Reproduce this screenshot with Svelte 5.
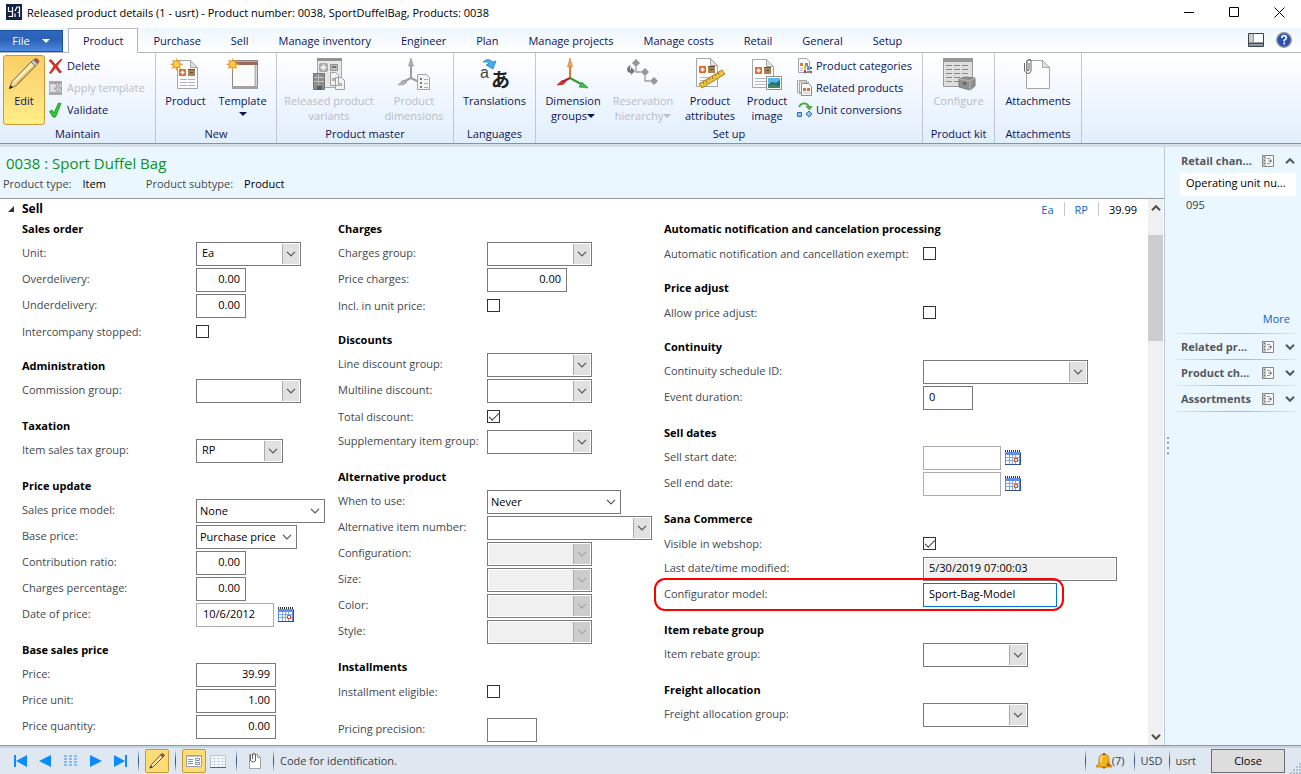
<script lang="ts">
	type Field = {
		id: string;
		label: string;
		kind: 'lookup' | 'select' | 'number' | 'text' | 'date' | 'check';
		width?: number;
		value?: string;
		checked?: boolean;
		disabled?: boolean;
		highlight?: boolean;
	};

	type Group = { title?: string; fields: Field[] };

	const tabs = [
		'Product',
		'Purchase',
		'Sell',
		'Manage inventory',
		'Engineer',
		'Plan',
		'Manage projects',
		'Manage costs',
		'Retail',
		'General',
		'Setup'
	];

	let activeTab = $state('Product');
	let expanded = $state(true);

	const columns: { name: string; groups: Group[] }[] = [
		{
			name: 'col-sales',
			groups: [
				{
					title: 'Sales order',
					fields: [
						{ id: 'unit', label: 'Unit:', kind: 'lookup', width: 105, value: 'Ea' },
						{ id: 'over', label: 'Overdelivery:', kind: 'number', width: 50, value: '0.00' },
						{ id: 'under', label: 'Underdelivery:', kind: 'number', width: 50, value: '0.00' },
						{ id: 'interco', label: 'Intercompany stopped:', kind: 'check' }
					]
				},
				{
					title: 'Administration',
					fields: [{ id: 'commission', label: 'Commission group:', kind: 'lookup', width: 105 }]
				},
				{
					title: 'Taxation',
					fields: [{ id: 'tax', label: 'Item sales tax group:', kind: 'lookup', width: 87, value: 'RP' }]
				},
				{
					title: 'Price update',
					fields: [
						{ id: 'model', label: 'Sales price model:', kind: 'select', width: 129, value: 'None' },
						{ id: 'base', label: 'Base price:', kind: 'select', width: 101, value: 'Purchase price' },
						{ id: 'ratio', label: 'Contribution ratio:', kind: 'number', width: 50, value: '0.00' },
						{ id: 'percent', label: 'Charges percentage:', kind: 'number', width: 50, value: '0.00' },
						{ id: 'pricedate', label: 'Date of price:', kind: 'date', width: 78, value: '10/6/2012' }
					]
				},
				{
					title: 'Base sales price',
					fields: [
						{ id: 'price', label: 'Price:', kind: 'number', width: 80, value: '39.99' },
						{ id: 'priceunit', label: 'Price unit:', kind: 'number', width: 80, value: '1.00' },
						{ id: 'priceqty', label: 'Price quantity:', kind: 'number', width: 80, value: '0.00' }
					]
				}
			]
		},
		{
			name: 'col-charges',
			groups: [
				{
					title: 'Charges',
					fields: [
						{ id: 'chargesgroup', label: 'Charges group:', kind: 'lookup', width: 105 },
						{ id: 'pricecharges', label: 'Price charges:', kind: 'number', width: 80, value: '0.00' },
						{ id: 'incl', label: 'Incl. in unit price:', kind: 'check' }
					]
				},
				{
					title: 'Discounts',
					fields: [
						{ id: 'line', label: 'Line discount group:', kind: 'lookup', width: 105 },
						{ id: 'multiline', label: 'Multiline discount:', kind: 'lookup', width: 105 },
						{ id: 'total', label: 'Total discount:', kind: 'check', checked: true },
						{ id: 'supplementary', label: 'Supplementary item group:', kind: 'lookup', width: 105 }
					]
				},
				{
					title: 'Alternative product',
					fields: [
						{ id: 'when', label: 'When to use:', kind: 'select', width: 134, value: 'Never' },
						{ id: 'altitem', label: 'Alternative item number:', kind: 'lookup', width: 165 },
						{ id: 'config', label: 'Configuration:', kind: 'lookup', width: 105, disabled: true },
						{ id: 'size', label: 'Size:', kind: 'lookup', width: 105, disabled: true },
						{ id: 'color', label: 'Color:', kind: 'lookup', width: 105, disabled: true },
						{ id: 'style', label: 'Style:', kind: 'lookup', width: 105, disabled: true }
					]
				},
				{
					title: 'Installments',
					fields: [{ id: 'installment', label: 'Installment eligible:', kind: 'check' }]
				},
				{
					fields: [{ id: 'precision', label: 'Pricing precision:', kind: 'number', width: 50 }]
				}
			]
		},
		{
			name: 'col-other',
			groups: [
				{
					title: 'Automatic notification and cancelation processing',
					fields: [{ id: 'exempt', label: 'Automatic notification and cancellation exempt:', kind: 'check' }]
				},
				{
					title: 'Price adjust',
					fields: [{ id: 'adjust', label: 'Allow price adjust:', kind: 'check' }]
				},
				{
					title: 'Continuity',
					fields: [
						{ id: 'schedule', label: 'Continuity schedule ID:', kind: 'lookup', width: 165 },
						{ id: 'duration', label: 'Event duration:', kind: 'text', width: 50, value: '0' }
					]
				},
				{
					title: 'Sell dates',
					fields: [
						{ id: 'start', label: 'Sell start date:', kind: 'date', width: 78 },
						{ id: 'end', label: 'Sell end date:', kind: 'date', width: 78 }
					]
				},
				{
					title: 'Sana Commerce',
					fields: [
						{ id: 'webshop', label: 'Visible in webshop:', kind: 'check', checked: true },
						{
							id: 'modified',
							label: 'Last date/time modified:',
							kind: 'text',
							width: 194,
							value: '5/30/2019 07:00:03',
							disabled: true
						},
						{
							id: 'configurator',
							label: 'Configurator model:',
							kind: 'text',
							width: 134,
							value: 'Sport-Bag-Model',
							highlight: true
						}
					]
				},
				{
					title: 'Item rebate group',
					fields: [{ id: 'rebate', label: 'Item rebate group:', kind: 'lookup', width: 105 }]
				},
				{
					title: 'Freight allocation',
					fields: [{ id: 'freight', label: 'Freight allocation group:', kind: 'lookup', width: 105 }]
				}
			]
		}
	];

	const factBoxes = ['Related pr...', 'Product ch...', 'Assortments'];
</script>

{#snippet chevron()}
	<svg width="10" height="6" viewBox="0 0 10 6" aria-hidden="true">
		<path d="M1 .8 5 4.8 9 .8" fill="none" stroke="currentColor" stroke-width="1.2" />
	</svg>
{/snippet}

{#snippet page(x: number, y: number, w: number, h: number)}
	<path d="M{x} {y}h{w - 7}l7 7v{h - 7}h-{w}z" fill="#fcfcfc" stroke="#a6a6a6" />
	<path d="M{x + w - 7} {y}v7h7z" fill="#e2e2e2" stroke="#a6a6a6" />
{/snippet}

{#snippet sun()}
	<path
		d="m6.5 0 1.4 3.3 3.2-1.8-1.4 3.400 3.600 1.300-3.600 1.500 1.500 3.300-3.400-1.400-1.300 3.500-1.400-3.500-3.400 1.500 1.500-3.400L0 6.300l3.500-1.400L2 1.500l3.300 1.600z"
		fill="#ed9a17"
	/>
	<circle cx="6.6" cy="6.3" r="2.8" fill="#ffc94a" />
{/snippet}

{#snippet productMarks(x: number, y: number)}
	<rect {x} {y} width="7" height="7" rx="1" fill="#e2662b" />
	<path d="M{x + 3.5} {y + 1.5}v4M{x + 1.5} {y + 3.5}h4" stroke="#fff" stroke-width="1.6" />
	<rect x={x + 9} {y} width="7" height="7" fill="#a98252" />
	<path d="M{x + 9} {y + 0.5}h7M{x + 11} {y + 3.5}h3" stroke="#6b4f2c" />
{/snippet}

{#snippet icon(name: string)}
	{#if name === 'edit'}
		<svg width="32" height="32" viewBox="0 0 32 32" aria-hidden="true">
			<path d="m1.500 30.500 2.500-7L23 4l4.500 4L8.500 27.500z" fill="#f3dc98" stroke="#7d6a3a" />
			<path d="M6 24 24.500 5.500" stroke="#fff6cf" stroke-width="1.500" />
			<path d="M8 26.500 27 7.500" stroke="#b98d3c" />
			<path d="m1 31 1.500-4 2.500 2.500z" fill="#222" />
			<path d="m25.500 2 2-1.500q3.500.5 3.500 3.500l-2 2z" fill="#c9454e" stroke="#7a4347" stroke-width=".7" />
			<path d="M23 4 25.500 1.800 29.700 6 27.500 8z" fill="#c3d3cb" stroke="#597064" stroke-width=".8" />
		</svg>
	{:else if name === 'delete'}
		<svg width="16" height="16" viewBox="0 0 16 16" aria-hidden="true">
			<path d="M1 2.500 3 1.500 7.500 6.500 13 1l1 .5L9 8l4.500 6-2 1L7.500 9.800 3 15.500l-1.500-.5L6 8z" fill="#d93226" stroke="#a8170f" stroke-width=".6" />
		</svg>
	{:else if name === 'apply'}
		<svg width="16" height="16" viewBox="0 0 16 16" aria-hidden="true">
			<path d="M1.500 2.500h12v11h-12z" fill="#dedede" stroke="#b0b0b0" />
			<path d="M1 1h13v3H1zM1 12h13v3H1z" fill="#a9a9a9" />
			<path d="M7 3q5-1 5 5h2l-4 4.500L6 8h3q0-3-2-5z" fill="#c8c8c8" stroke="#8f8f8f" stroke-width=".7" />
		</svg>
	{:else if name === 'validate'}
		<svg width="16" height="16" viewBox="0 0 16 16" aria-hidden="true">
			<path d="M1.500 9.500 4 8l2 3L10.500 1l2.500.5L7.500 15H5z" fill="#2ccc35" stroke="#118c1c" stroke-width=".8" />
		</svg>
	{:else if name === 'product'}
		<svg width="32" height="32" viewBox="0 0 32 32" aria-hidden="true">
			{@render page(7.5, 2.5, 20, 28)}
			{@render productMarks(9, 11)}
			<path d="M10 21.500h15M10 24.500h15M10 27.500h15" stroke="#a7b4c5" />
			<path d="M17.500 20v9" stroke="#fcfcfc" />
			<g>{@render sun()}</g>
		</svg>
	{:else if name === 'template'}
		<svg width="34" height="32" viewBox="0 0 34 32" aria-hidden="true">
			<path d="M6.500 2.500h25v28h-25z" fill="#fbfbfb" stroke="#8d8885" />
			<path d="M7 3h25v4H7z" fill="#9d6a55" />
			<path d="M7 3.500h24" stroke="#c9a696" />
			<path d="M6 28h26v3H6z" fill="#a1a1a1" />
			<path d="M29.500 7v21" stroke="#b5b5b5" stroke-width="2" />
			<g>{@render sun()}</g>
		</svg>
	{:else if name === 'variants'}
		<svg width="34" height="32" viewBox="0 0 34 32" aria-hidden="true">
			<path d="M5.500.5h24v29h-24z" fill="#e8e8e8" stroke="#a8a8a8" />
			<path d="M5 0h25v3H5z" fill="#929292" />
			<rect x="7" y="5" width="9" height="9" rx="2" fill="#a8a8a8" />
			<path d="M11.500 6.500v6M8.500 9.500h6" stroke="#f3f3f3" stroke-width="2" />
			<path d="M18.500 6.500h7v6h-7z" fill="#bdbdbd" stroke="#909090" />
			<path d="M20 8h4v2h-4z" fill="#737373" />
			<path d="M1.500 15.500h11v16h-11z" fill="#8d8d8d" stroke="#777" />
			<path d="M2 19.500h10M2 23.500h10" stroke="#c6c6c6" />
			<path d="M6.500 16v11" stroke="#bbb" />
			<path d="M5 28h5v4H5z" fill="#5e5e5e" />
			<path d="M18.500 14.500h5l3 3v10h-8zM23.500 19.500h6l3 3v9h-9z" fill="#f2f2f2" stroke="#a0a0a0" />
			<path d="M20 20h3v3h-3zM26 25h4v3h-4z" fill="#b4b4b4" />
		</svg>
	{:else if name === 'dims'}
		<svg width="34" height="32" viewBox="0 0 34 32" aria-hidden="true">
			<path d="M14 7v13l-8 4M14 20l8 4" fill="none" stroke="#9d9d9d" stroke-width="2" />
			<path d="m14 0 2.500 8h-5zM1 27l5-5 4 2-3 2.500z" fill="#b3b3b3" stroke="#8d8d8d" stroke-width=".6" />
			<path d="M20.500 16.500h9l3 3v12h-12z" fill="#f4f4f4" stroke="#a4a4a4" />
			<path d="M23 20h2v2h-2zM23 24h2v2h-2zM23 28h2v2h-2z" fill="#777" />
			<path d="M27 21.500h4M27 25.500h4M27 29.500h4" stroke="#aaa" />
		</svg>
	{:else if name === 'translate'}
		<svg class="letters" width="32" height="32" viewBox="0 0 32 32" aria-hidden="true">
			<text x="1" y="20" font-size="16" fill="#444">a</text>
			<text x="12" y="29" font-size="19" font-weight="bold" fill="#222">あ</text>
			<path d="M4 4Q9-1 14 4l3-1-3 8-7-4 3-1Q8 3 4 4z" fill="#43ade8" stroke="#1c79b8" stroke-width=".7" />
		</svg>
	{:else if name === 'dimgroups'}
		<svg width="34" height="32" viewBox="0 0 34 32" aria-hidden="true">
			<path d="M14 8v12" stroke="#d87a2a" stroke-width="2" />
			<path d="m14 0 2.500 9h-5z" fill="#efa460" stroke="#c9762c" stroke-width=".6" />
			<path d="m14 20-8 4" stroke="#b51e23" stroke-width="2" />
			<path d="m1 27 5-4.500 4 1-3 3z" fill="#d82b30" stroke="#a3151a" stroke-width=".6" />
			<path d="m14 20 11 6" stroke="#2c9e33" stroke-width="2" />
			<path d="m32 30-9-1 3-5z" fill="#42bd47" stroke="#23832a" stroke-width=".6" />
		</svg>
	{:else if name === 'hierarchy'}
		<svg width="34" height="32" viewBox="0 0 34 32" aria-hidden="true">
			<path d="M10 8v6h9M19 14v9h9" fill="none" stroke="#9a9a9a" stroke-width="1.300" />
			<path d="m10 1 4 4-4 4-4-4zM19 10l4 4-4 4-4-4zM28 19l4 4-4 4-4-4z" fill="#979797" stroke="#c2c2c2" />
			<path d="M5 7q-4 1-4 5 1 3 4 3v2l4-4-4-4v3q-2-1 0-5z" fill="#777" />
		</svg>
	{:else if name === 'attributes'}
		<svg width="32" height="32" viewBox="0 0 32 32" aria-hidden="true">
			{@render page(2.5, 0.5, 21, 28)}
			{@render productMarks(5, 8)}
			<path d="M6 19.500h15M6 22.500h12M6 25.500h9" stroke="#aebaca" />
			<path d="m5 26 23-14 3 4L8 30z" fill="#edc440" stroke="#a8821f" />
			<path d="m9 24 1 2m2-4 1 3m2-5 1 2m2-4 1 3m2-5 1 2m2-4 1 3" stroke="#866617" stroke-width=".8" />
		</svg>
	{:else if name === 'image'}
		<svg width="32" height="32" viewBox="0 0 32 32" aria-hidden="true">
			{@render page(1.5, 1.5, 21, 28)}
			{@render productMarks(4, 9)}
			<path d="M4 20.500h11M4 23.500h11M4 26.500h11" stroke="#aebaca" />
			<path d="M15.500 18.500h15v13h-15z" fill="#fff" stroke="#8d8d8d" />
			<path d="M17 20h12v5H17z" fill="#5ab6e6" />
			<path d="m17 26 4-2 4 1 4-3v8H17z" fill="#1b6689" />
			<path d="m17 27 5-1 7 2v2H17z" fill="#3d8a58" />
		</svg>
	{:else if name === 'categories'}
		<svg width="16" height="16" viewBox="0 0 16 16" aria-hidden="true">
			<path d="M1.500.5h8l3 3v11h-11z" fill="#fafafa" stroke="#a6a6a6" />
			<path d="M3 5h3v3H3z" fill="#dc7444" />
			<path d="M8 5h3v3H8z" fill="#a98252" />
			<path d="M3 10.500h3M3 12.500h3" stroke="#b7c0cc" />
			<path d="M7 8h2v3H7z" fill="#e8b518" />
			<path d="M10 8h2v4h-2z" fill="#25a7d8" />
			<path d="M13 9h2v2h-2z" fill="#8a37a4" />
			<path d="M7 12h2v3H7zM13 13h2v2h-2z" fill="#d22f4e" />
			<path d="M10 13h2v2h-2z" fill="#36a348" />
		</svg>
	{:else if name === 'related'}
		<svg width="16" height="16" viewBox="0 0 16 16" aria-hidden="true">
			<path d="M.5.5h9v12h-9zM2.500 2h9v12h-9z" fill="#f4f4f4" stroke="#a6a6a6" />
			<path d="M4.500 3.500h7l3 3v9h-10z" fill="#fcfcfc" stroke="#8d8d8d" />
			<path d="M6 8h3v3H6z" fill="#dc7444" />
			<path d="M10 8h3v3h-3z" fill="#a98252" />
			<path d="M6 13h7" stroke="#b7c0cc" />
		</svg>
	{:else if name === 'conversions'}
		<svg width="16" height="16" viewBox="0 0 16 16" aria-hidden="true">
			<path d="M2 5q2-4 6-3.500 3 .5 4 3" fill="none" stroke="#45ab35" stroke-width="1.800" />
			<path d="M9 4.500h6L12.500 8z" fill="#55b83f" stroke="#298a21" stroke-width=".6" />
			<path d="M.5 10.500h4v4h-4zM12 9l3 3-3 3-3-3z" fill="#8fc0f2" stroke="#2f6fb6" />
		</svg>
	{:else if name === 'configure'}
		<svg width="34" height="32" viewBox="0 0 34 32" aria-hidden="true">
			<path d="M1.500.5h29v28h-29z" fill="#dedede" stroke="#999" />
			<path d="M1 0h30v4H1z" fill="#979797" />
			<path d="M4 7.500h24M4 11.500h24M4 15.500h24M4 19.500h24M4 23.500h13" stroke="#8a8a8a" stroke-dasharray="6 2" />
			<path d="m17 21 6-2 10 1v8l-5 4-11-3z" fill="#909090" stroke="#7c7c7c" />
			<path d="m17 21 11 2v9M28 23l5-3" fill="none" stroke="#b8b8b8" />
			<path d="M21 24h3v3h-3z" fill="#666" />
		</svg>
	{:else if name === 'attach'}
		<svg width="32" height="32" viewBox="0 0 32 32" aria-hidden="true">
			{@render page(4.5, 2.5, 23, 28)}
			<path d="M7 5v7q-1 2-2 0V3q2-3 4-1v11q-1 3-3 2.500T2.500 13V5" fill="none" stroke="#666" />
		</svg>
	{:else if name === 'calendar'}
		<svg width="16" height="16" viewBox="0 0 16 16" aria-hidden="true">
			<path d="M0 2h16v13H0z" fill="#5f8fe6" />
			<path d="M0 1h16" stroke="#333" stroke-width="2" stroke-dasharray="1 1" />
			<path d="M1 5h13v9H1z" fill="#fff" />
			<path d="M4.500 5v9M7.500 5v9M10.500 5v9M1 7.500h13M1 10.500h13" stroke="#86a9e4" />
			<path d="M15.500 3v12M0 14.500h16" stroke="#2f4e8c" />
			<path d="M9.500 8.500h3v3h-3z" fill="#fff" stroke="#e0431a" />
		</svg>
	{:else if name === 'box'}
		<svg width="12" height="12" viewBox="0 0 12 12" aria-hidden="true">
			<path d="M.5.5h11v11H.5z" fill="#f7f7f7" stroke="#858585" />
			<path d="M1 1h3v10H1z" fill="#c4c4c4" />
			<path d="M2.500 2v8" stroke="#666" stroke-dasharray="1 2" />
			<path d="M5 3.500h3M5 8.500h3M6 6h3" stroke="#999" />
			<path d="M8 4v4l2-2z" fill="#666" />
		</svg>
	{/if}
{/snippet}

{#snippet big(label: string, name: string, opts: { second?: string; off?: boolean; menu?: boolean; cls: string })}
	<button type="button" class="big {opts.cls}" disabled={opts.off}>
		<span class="pic">{@render icon(name)}</span>
		<span>{label}</span>
		{#if opts.second}
			<span class="line-two">{opts.second}{#if opts.menu}<i class="tri"></i>{/if}</span>
		{:else if opts.menu}
			<i class="tri below"></i>
		{/if}
	</button>
{/snippet}

{#snippet small(label: string, name: string, off: boolean)}
	<button type="button" class="small" disabled={off}>
		{@render icon(name)}
		<span>{label}</span>
	</button>
{/snippet}

{#snippet field(f: Field)}
	<div class="row" class:check={f.kind === 'check'} class:highlight={f.highlight}>
		<label for={f.id}>{f.label}</label>
		{#if f.kind === 'check'}
			<input id={f.id} type="checkbox" checked={f.checked} />
		{:else if f.kind === 'lookup' || f.kind === 'select'}
			<div class="combo {f.kind} w{f.width}">
				<select id={f.id} disabled={f.disabled}>
					<option>{f.value ?? ''}</option>
				</select>
				<span class="arrow">{@render chevron()}</span>
			</div>
		{:else}
			<input
				id={f.id}
				type="text"
				class="box {f.kind} w{f.width}"
				value={f.value ?? ''}
				disabled={f.disabled}
			/>
			{#if f.kind === 'date'}
				<button type="button" class="calendar" aria-label="Pick a date">{@render icon('calendar')}</button>
			{/if}
		{/if}
	</div>
{/snippet}

<div class="window">
	<header class="titlebar">
		<svg width="16" height="16" viewBox="0 0 16 16" aria-hidden="true">
			<path d="M0 0h16v16H0z" fill="#12224a" />
			<path d="M2.500 3v4.500h4M6.500 3v9.500h-4M9 13V9.500M9 7l2-4h2.500v10M11.500 8.500h2" fill="none" stroke="#fff" stroke-width="1.200" />
		</svg>
		<h1>Released product details (1 - usrt) - Product number: 0038, SportDuffelBag, Products: 0038</h1>
		<div class="window-buttons">
			<button type="button" aria-label="Minimize">
				<svg width="11" height="11" viewBox="0 0 11 11"><path d="M0 5.500h10" stroke="#000" /></svg>
			</button>
			<button type="button" aria-label="Maximize">
				<svg width="11" height="11" viewBox="0 0 11 11"><path d="M.5.5h9v9h-9z" fill="none" stroke="#000" /></svg>
			</button>
			<button type="button" aria-label="Close window">
				<svg width="11" height="11" viewBox="0 0 11 11"><path d="m.5.500 10 10m0-10-10 10" stroke="#000" /></svg>
			</button>
		</div>
	</header>

	<nav class="tabs">
		<button type="button" class="file">File <i class="tri"></i></button>
		{#each tabs as tab}
			<button type="button" class="tab" class:active={tab === activeTab} onclick={() => (activeTab = tab)}>{tab}</button>
		{/each}
		<div class="tab-tools">
			<button type="button" aria-label="View layout">
				<svg width="16" height="14" viewBox="0 0 16 14">
					<path d="M.5.5h15v13H.5z" fill="#8f98a1" stroke="#3d4247" />
					<path d="M1 1h4v8H1z" fill="#c5ccd3" />
					<path d="M6 1h9v8H6z" fill="#fff" />
					<path d="M1 10.500h14" stroke="#4b5157" />
				</svg>
			</button>
			<button type="button" aria-label="Help">
				<svg width="16" height="16" viewBox="0 0 16 16">
					<circle cx="8" cy="8" r="7.200" fill="#2a4fb5" stroke="#8d9094" stroke-width="1.500" />
					<path d="M5.700 6q.2-2.300 2.400-2.300T10.400 6Q10.300 7.200 8.200 8.200v1.300" fill="none" stroke="#fff" stroke-width="1.700" />
					<path d="M7.300 10.600h1.800v1.800H7.300z" fill="#fff" />
				</svg>
			</button>
		</div>
	</nav>

	<div class="ribbon">
		<section class="maintain">
			<div class="tools">
				{@render big('Edit', 'edit', { cls: 'pressed' })}
				<div class="stack">
					{@render small('Delete', 'delete', false)}
					{@render small('Apply template', 'apply', true)}
					{@render small('Validate', 'validate', false)}
				</div>
			</div>
			<h2>Maintain</h2>
		</section>
		<section class="new">
			<div class="tools">
				{@render big('Product', 'product', { cls: 'b57' })}
				{@render big('Template', 'template', { menu: true, cls: 'b57' })}
			</div>
			<h2>New</h2>
		</section>
		<section class="master">
			<div class="tools">
				{@render big('Released product', 'variants', { second: 'variants', off: true, cls: 'b100' })}
				{@render big('Product', 'dims', { second: 'dimensions', off: true, cls: 'b70' })}
			</div>
			<h2>Product master</h2>
		</section>
		<section class="languages">
			<div class="tools">
				{@render big('Translations', 'translate', { cls: 'b70' })}
			</div>
			<h2>Languages</h2>
		</section>
		<section class="setup">
			<div class="tools">
				{@render big('Dimension', 'dimgroups', { second: 'groups', menu: true, cls: 'b70' })}
				{@render big('Reservation', 'hierarchy', { second: 'hierarchy', off: true, menu: true, cls: 'b70' })}
				{@render big('Product', 'attributes', { second: 'attributes', cls: 'b64' })}
				{@render big('Product', 'image', { second: 'image', cls: 'b50' })}
				<div class="stack">
					{@render small('Product categories', 'categories', false)}
					{@render small('Related products', 'related', false)}
					{@render small('Unit conversions', 'conversions', false)}
				</div>
			</div>
			<h2>Set up</h2>
		</section>
		<section class="kit">
			<div class="tools">
				{@render big('Configure', 'configure', { off: true, cls: 'b70' })}
			</div>
			<h2>Product kit</h2>
		</section>
		<section class="attachments">
			<div class="tools">
				{@render big('Attachments', 'attach', { cls: 'b82' })}
			</div>
			<h2>Attachments</h2>
		</section>
	</div>

	<div class="body">
		<main>
			<div class="record">
				<h2>0038 : Sport Duffel Bag</h2>
				<dl>
					<dt>Product type:</dt>
					<dd>Item</dd>
					<dt class="subtype">Product subtype:</dt>
					<dd>Product</dd>
				</dl>
			</div>
			<div class="scroll">
				<div class="fasttab">
					<div class="fasttab-head">
						<button type="button" aria-expanded={expanded} onclick={() => (expanded = !expanded)}>
							<svg width="6" height="6" viewBox="0 0 6 6" aria-hidden="true"><path d="M6 0v6H0z" fill="#333" /></svg>
							Sell
						</button>
						<ul>
							<li><a href="#unit">Ea</a></li>
							<li><a href="#tax">RP</a></li>
							<li>39.99</li>
						</ul>
					</div>
					{#if expanded}
						<div class="columns">
							{#each columns as column}
								<div class="column {column.name}">
									{#each column.groups as group}
										<div class="group">
											{#if group.title}<h3>{group.title}</h3>{/if}
											<div class="rows">
												{#each group.fields as f (f.id)}
													{@render field(f)}
												{/each}
											</div>
										</div>
									{/each}
								</div>
							{/each}
						</div>
					{/if}
				</div>
				<div class="scrollbar">
					<button type="button" class="up" aria-label="Scroll up">{@render chevron()}</button>
					<div class="thumb"></div>
					<button type="button" aria-label="Scroll down">{@render chevron()}</button>
				</div>
			</div>
		</main>

		<aside>
			<i class="grip"></i>
			<div class="factbox">
				<h3>Retail chan...</h3>
				{@render icon('box')}
				<button type="button" class="up" aria-label="Collapse">{@render chevron()}</button>
			</div>
			<div class="units">
				<div class="head">Operating unit nu...</div>
				<div class="cell">095</div>
				<a href="#more">More</a>
			</div>
			{#each factBoxes as title}
				<hr />
				<div class="factbox">
					<h3>{title}</h3>
					{@render icon('box')}
					<button type="button" aria-label="Expand">{@render chevron()}</button>
				</div>
			{/each}
			<hr />
		</aside>
	</div>

	<footer>
		<div class="nav-buttons">
			<button type="button" aria-label="First record">
				<svg width="13" height="12" viewBox="0 0 13 12"><path d="M0 0h2v12H0zM13 0v12L2 6z" fill="#0a8cff" /></svg>
			</button>
			<button type="button" aria-label="Previous record">
				<svg width="13" height="12" viewBox="0 0 13 12"><path d="M12 0v12L0 6z" fill="#0a8cff" /></svg>
			</button>
			<button type="button" aria-label="Grid view">
				<svg width="13" height="12" viewBox="0 0 13 12">
					<path d="M0 1h3M0 4h3M0 7h3M0 10h3M5 1h3M5 4h3M5 7h3M5 10h3M10 1h3M10 4h3M10 7h3M10 10h3" stroke="#8db9ec" stroke-width="2" />
				</svg>
			</button>
			<button type="button" aria-label="Next record">
				<svg width="13" height="12" viewBox="0 0 13 12"><path d="M1 0v12l12-6z" fill="#0a8cff" /></svg>
			</button>
			<button type="button" aria-label="Last record">
				<svg width="13" height="12" viewBox="0 0 13 12"><path d="M11 0h2v12h-2zM0 0v12l11-6z" fill="#0a8cff" /></svg>
			</button>
		</div>
		<i class="sep"></i>
		<button type="button" class="toggle" aria-label="Edit mode">
			<svg width="16" height="16" viewBox="0 0 32 32">
				<path d="m2 30 3-7L23 4l5 4L9 27z" fill="#f7e6b4" stroke="#6b5628" stroke-width="2" />
				<path d="m23 4 3-3q4 1 5 4l-3 3z" fill="#c9454e" stroke="#5c5c5c" stroke-width="2" />
				<path d="m1 31 2-6 4 4z" fill="#333" />
			</svg>
		</button>
		<i class="sep"></i>
		<button type="button" class="toggle" aria-label="Form view">
			<svg width="16" height="12" viewBox="0 0 16 12">
				<path d="M.5.5h15v11H.5z" fill="#fff" stroke="#9b9fa6" />
				<path d="M1 1.500h14" stroke="#b9c2d3" />
				<path d="M2 4.500h5M2 6.500h5M2 8.500h5" stroke="#8a8f97" />
				<path d="M9.500 3.500h4v2h-4zM9.500 7.500h4v2h-4z" fill="none" stroke="#8a8f97" />
			</svg>
		</button>
		<button type="button" class="toggle plain" aria-label="List view">
			<svg width="16" height="13" viewBox="0 0 16 13">
				<path d="M.5.5h15v12H.5z" fill="#fff" stroke="#b4c4dd" />
				<path d="M4.500 1v11M8.500 1v11M12.500 1v11M1 3.500h14M1 6.500h14M1 9.500h14" stroke="#d3deee" />
				<path d="M0 12.500h16" stroke="#51627f" />
			</svg>
		</button>
		<i class="sep"></i>
		<button type="button" class="toggle plain" aria-label="Attachments">
			<svg width="14" height="16" viewBox="0 0 14 16">
				<path d="M1.500 1.500h8l3 3v11h-11z" fill="#fff" stroke="#a3a3a3" />
				<path d="M9.500 1.500v3h3" fill="none" stroke="#a3a3a3" />
				<path d="M2.500 2v6q2.500 2 5 0V1q-2.500-1.500-3 0v5" fill="none" stroke="#666" />
			</svg>
		</button>
		<i class="sep"></i>
		<p>Code for identification.</p>
		<i class="sep"></i>
		<button type="button" class="alerts">
			<svg width="16" height="16" viewBox="0 0 16 16" aria-hidden="true">
				<path d="M8 1q5 0 5 6v3l2.500 3v1H.5v-1L3 10V7q0-6 5-6z" fill="#f2b21c" stroke="#b3700b" stroke-width=".8" />
				<path d="M6 3Q4.500 5 4.800 9" fill="none" stroke="#fff0a8" stroke-width="1.500" />
				<path d="M6 14h4l-2 2zM7 0h2v2H7z" fill="#9a5c0a" />
				<path d="m12 9 3 4h-5z" fill="#a7620c" />
			</svg>
			<span>(7)</span>
		</button>
		<i class="sep"></i>
		<span class="status">USD</span>
		<i class="sep"></i>
		<span class="status">usrt</span>
		<button type="button" class="close">Close</button>
		<svg class="resize" width="11" height="11" viewBox="0 0 11 11" aria-hidden="true">
			<path d="M9 0h2v2H9zM6 3h2v2H6zM9 3h2v2H9zM3 6h2v2H3zM6 6h2v2H6zM9 6h2v2H9zM0 9h2v2H0zM3 9h2v2H3zM6 9h2v2H6zM9 9h2v2H9z" fill="#b4bfcc" />
		</svg>
	</footer>
</div>

<style>
	:global(body) {
		margin: 0;
	}

	.window {
		display: flex;
		flex-direction: column;
		min-height: 100vh;
		background: #fff;
		color: #000;
		font-family: 'Open Sans', 'Noto Sans', sans-serif;
		font-size: 11px;
		line-height: 16px;
	}

	.window * {
		box-sizing: border-box;
	}

	h1,
	h2,
	h3,
	p,
	ul,
	dl,
	dd {
		margin: 0;
		padding: 0;
		font-size: inherit;
		font-weight: normal;
	}

	button {
		margin: 0;
		padding: 0;
		border: 0;
		background: none;
		color: inherit;
		font: inherit;
	}

	svg {
		display: block;
		flex: none;
		overflow: visible;
	}

	a {
		color: #0b62c9;
		text-decoration: none;
	}

	.up svg {
		transform: rotate(180deg);
	}

	.tri {
		display: inline-block;
		border: 4px solid transparent;
		border-top-color: currentColor;
		border-bottom: 0;
	}

	/* title bar */
	.titlebar {
		display: flex;
		align-items: center;
		gap: 5px;
		height: 28px;
		padding: 0 16px 4px 6px;
	}

	.titlebar h1 {
		flex: 1;
		padding-top: 2px;
	}

	.window-buttons {
		display: flex;
		gap: 34px;
	}

	/* ribbon tabs */
	.tabs {
		display: flex;
		height: 25px;
		border-bottom: 1px solid #b2b6c0;
		background: linear-gradient(#edf6ff, #fff);
		color: #0c1358;
	}

	.file {
		display: flex;
		align-items: center;
		justify-content: center;
		gap: 12px;
		width: 63px;
		height: 22px;
		margin: 2px 5px 0 0;
		border: 1px solid #1d4f9f;
		border-left: 0;
		background: linear-gradient(#2d66bb, #2c62b6 45%, #4a8ae0);
		color: #fff;
	}

	.tab {
		padding: 0 14px;
		border: 1px solid transparent;
		border-bottom: 0;
	}

	.tab.active {
		height: 25px;
		border-color: #b2b6c0;
		background: #fff;
	}

	.tab-tools {
		display: flex;
		flex: 1;
		align-items: center;
		justify-content: flex-end;
		gap: 12px;
		padding-right: 9px;
	}

	/* ribbon */
	.ribbon {
		display: flex;
		height: 94px;
		border-bottom: 3px solid #d5dde6;
		background: linear-gradient(#fff, #f4f9ff 35%, #e1eefc);
		color: #0c1358;
		box-shadow: inset 0 -1px #8a90a3;
	}

	.ribbon section {
		display: flex;
		flex-direction: column;
		margin-bottom: 1px;
		border-right: 1px solid #c0c6d2;
	}

	.ribbon h2 {
		padding-bottom: 1px;
		text-align: center;
	}

	.tools {
		display: flex;
		flex: 1;
		padding-top: 2px;
	}

	.maintain {
		width: 156px;
	}

	.maintain .tools {
		gap: 3px;
		padding-left: 3px;
	}

	.new {
		width: 121px;
	}

	.new .tools {
		padding-left: 1px;
	}

	.master {
		width: 177px;
	}

	.master .tools,
	.setup .tools {
		padding-left: 2px;
	}

	.languages {
		width: 82px;
	}

	.setup {
		width: 387px;
	}

	.kit {
		width: 72px;
	}

	.attachments {
		width: 87px;
	}

	.languages .tools,
	.kit .tools,
	.attachments .tools {
		justify-content: center;
	}

	.big {
		display: flex;
		flex-direction: column;
		align-items: center;
		height: 70px;
		line-height: 15px;
		white-space: nowrap;
	}

	.big.pressed {
		width: 42px;
		border: 1px solid #c79b33;
		border-radius: 3px;
		background: linear-gradient(#fbcf64, #fddf7f 60%, #ffef85);
	}

	.pic {
		margin: 3px 0;
	}

	.pressed .pic {
		margin-top: 2px;
	}

	.line-two {
		display: flex;
		align-items: center;
	}

	.below {
		margin-top: 4px;
	}

	.b50 {
		width: 50px;
	}

	.b57 {
		width: 57px;
	}

	.b64 {
		width: 64px;
	}

	.b70 {
		width: 70px;
	}

	.b82 {
		width: 82px;
	}

	.b100 {
		width: 100px;
	}

	.ribbon button:disabled {
		color: #b9bcc3;
	}

	.stack {
		display: flex;
		flex-direction: column;
	}

	.setup .stack {
		margin-left: 5px;
	}

	.small {
		display: flex;
		align-items: center;
		gap: 3px;
		height: 22px;
		white-space: nowrap;
	}

	.letters {
		font-family: 'Liberation Sans', 'Noto Sans CJK JP', sans-serif;
	}

	/* record header */
	.body {
		display: flex;
		flex: 1;
	}

	main {
		display: flex;
		flex: 1;
		flex-direction: column;
	}

	.record {
		height: 52px;
		padding-top: 6px;
		border-bottom: 1px solid #989ca0;
		background: #ebf7ff;
	}

	.record h2 {
		padding-left: 6px;
		color: #0d9122;
		font-size: 15px;
		line-height: 20px;
	}

	.record dl {
		display: flex;
		gap: 11px;
		padding: 3px 3px 0;
	}

	dt {
		color: #44484d;
	}

	.subtype {
		margin-left: 29px;
	}

	/* fast tab */
	.scroll {
		display: flex;
		flex: 1;
	}

	.fasttab {
		flex: 1;
	}

	.fasttab-head {
		display: flex;
		justify-content: space-between;
		height: 22px;
		padding: 1px 11px 0 8px;
	}

	.fasttab-head button {
		display: flex;
		align-items: center;
		gap: 8px;
		height: 18px;
		font-size: 12px;
		font-weight: 700;
	}

	.fasttab-head ul {
		display: flex;
		padding-top: 2px;
		list-style: none;
	}

	.fasttab-head li + li {
		height: 14px;
		margin-left: 10px;
		padding-left: 10px;
		border-left: 1px solid #c3c7cc;
	}

	.columns {
		display: grid;
		grid-template-columns: 316px 326px 1fr;
		padding: 0 0 3px 22px;
	}

	.column {
		display: flex;
		flex-direction: column;
		gap: 15px;
	}

	.group h3 {
		margin-bottom: 5px;
		font-weight: 700;
		white-space: nowrap;
	}

	.rows {
		display: flex;
		flex-direction: column;
		gap: 2px;
	}

	.row {
		display: flex;
		align-items: center;
		width: fit-content;
		height: 24px;
	}

	.row.check {
		height: 23px;
	}

	.row label {
		width: 174px;
		padding-bottom: 2px;
		color: #44484d;
		white-space: nowrap;
	}

	.row.check label {
		padding-bottom: 0;
	}

	.col-charges label {
		width: 149px;
	}

	.col-other label {
		width: 259px;
	}

	.w50 {
		width: 50px;
	}

	.w78 {
		width: 78px;
	}

	.w80 {
		width: 80px;
	}

	.w87 {
		width: 87px;
	}

	.w101 {
		width: 101px;
	}

	.w105 {
		width: 105px;
	}

	.w129 {
		width: 129px;
	}

	.w134 {
		width: 134px;
	}

	.w165 {
		width: 165px;
	}

	.w194 {
		width: 194px;
	}

	.box {
		height: 24px;
		padding: 0 5px 4px;
		border: 1px solid #7a7a7a;
		border-radius: 0;
		outline: 0;
		background: #fff;
		color: #000;
		font: inherit;
	}

	.box.number {
		text-align: right;
	}

	.box.date {
		padding-left: 6px;
		border-color: #abadb3;
	}

	.box:disabled {
		background: #f0f0f0;
		box-shadow: inset 0 0 0 1px #fff;
	}

	.calendar {
		margin-left: 4px;
	}

	.combo {
		display: grid;
		height: 24px;
		border: 1px solid #7a7a7a;
	}

	.combo select,
	.combo .arrow {
		grid-area: 1 / 1;
	}

	.combo select {
		width: 100%;
		height: 22px;
		padding: 0 3px;
		appearance: none;
		border: 1px solid #fff;
		border-radius: 0;
		outline: 0;
		background: #fff;
		color: #000;
		font: inherit;
		opacity: 1;
	}

	.combo.lookup select {
		padding: 0 4px 2px;
	}

	.combo.select select {
		padding: 0 2px;
	}

	.combo select:disabled {
		background: #f0f0f0;
	}

	.arrow {
		display: flex;
		align-items: center;
		justify-content: center;
		justify-self: end;
		width: 17px;
		height: 20px;
		margin: 1px;
		color: #555;
		pointer-events: none;
	}

	.lookup .arrow {
		border-left: 1px solid #acacac;
		background: #e1e1e1;
	}

	.lookup select:disabled + .arrow {
		background: #cdcdcd;
		color: #a5a5a5;
	}

	input[type='checkbox'] {
		display: grid;
		place-items: center;
		width: 13px;
		height: 13px;
		margin: 0;
		appearance: none;
		border: 1px solid #333;
		background: #fff;
	}

	input[type='checkbox']:checked::after {
		width: 9px;
		height: 4px;
		margin-bottom: 3px;
		border: solid #444;
		border-width: 0 0 1px 1px;
		content: '';
		transform: rotate(-45deg);
	}

	.row.highlight {
		position: relative;
	}

	.row.highlight .box {
		border-color: #0078d7;
	}

	.row.highlight::after {
		position: absolute;
		inset: -5px -7px -4px -10px;
		border: 2px solid #f00;
		border-radius: 11px;
		content: '';
		pointer-events: none;
	}

	.scrollbar {
		display: flex;
		flex-direction: column;
		width: 16px;
		border-right: 1px solid #fff;
		background: #f0f0f0;
		color: #505050;
	}

	.scrollbar button {
		display: grid;
		place-items: center;
		height: 17px;
	}

	.scrollbar path {
		stroke-width: 2;
	}

	.thumb {
		height: 106px;
		margin: 19px 0 auto;
		background: #cdcdcd;
	}

	/* fact boxes */
	aside {
		position: relative;
		width: 137px;
		padding: 1px 5px 0 11px;
		border-left: 1px solid #b4c8de;
		background: #ebf7ff;
		color: #54585d;
	}

	.grip {
		position: absolute;
		top: 290px;
		left: 2px;
		width: 2px;
		height: 18px;
		background: repeating-linear-gradient(#9aa3ad 0 2px, transparent 2px 5px);
	}

	.factbox {
		display: flex;
		align-items: center;
		height: 25px;
		padding: 0 1px 0 5px;
	}

	.factbox h3 {
		flex: 1;
		font-weight: 700;
		white-space: nowrap;
	}

	.factbox button {
		margin-left: 11px;
	}

	.factbox button path {
		stroke-width: 2;
	}

	.units {
		display: flex;
		flex-direction: column;
		height: 160px;
		padding-left: 4px;
	}

	.head {
		height: 23px;
		padding: 2px 0 0 6px;
		background: #fff;
		color: #000;
		white-space: nowrap;
	}

	.cell {
		flex: 1;
		padding: 1px 6px;
		color: #3c4046;
	}

	.units a {
		align-self: flex-end;
		padding: 0 6px 6px;
	}

	aside hr {
		height: 1px;
		margin: 0;
		border: 0;
		background: linear-gradient(90deg, #dbe7f3, #a9bdd8 40%, #a9bdd8 60%, #dbe7f3);
	}

	/* status bar */
	footer {
		display: flex;
		align-items: center;
		height: 29px;
		padding: 2px 0 0 14px;
		border-top: 1px solid #8e98ab;
		background: linear-gradient(#c8d3e2 2px, #dfe8f1 2px);
		color: #3c4046;
	}

	.nav-buttons {
		display: flex;
		gap: 12px;
	}

	.sep {
		width: 1px;
		height: 22px;
		margin: 0 6px;
		background: linear-gradient(#dfe8f1, #3a5d86 40%, #3a5d86 60%, #dfe8f1);
	}

	.nav-buttons + .sep {
		margin-left: 11px;
	}

	.toggle {
		display: grid;
		place-items: center;
		width: 24px;
		height: 24px;
		border: 1px solid #c79b33;
		border-radius: 2px;
		background: #fddc76;
	}

	.toggle.plain {
		border-color: transparent;
		background: none;
	}

	footer p {
		flex: 1;
	}

	.alerts {
		display: flex;
		align-items: center;
		margin: 0 3px 0 4px;
	}

	.close {
		width: 74px;
		height: 24px;
		margin: 0 5px 0 15px;
		border: 1px solid #707070;
		background: #ddd;
		color: #000;
	}

	.resize {
		align-self: flex-end;
	}
</style>
